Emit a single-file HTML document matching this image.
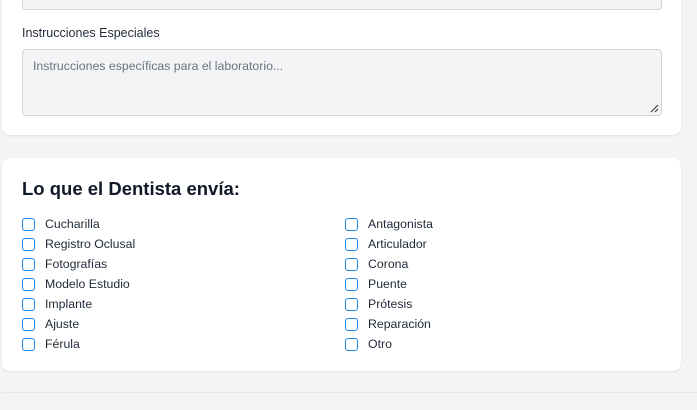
<!DOCTYPE html><html><head><style>
body{margin:0;width:697px;height:410px;background:#f3f4f6;font-family:"Liberation Sans",sans-serif;position:relative;overflow:hidden;color:#1f2937}
.card{position:absolute;left:2px;width:679px;background:#fff;border-radius:8px;box-shadow:0 1px 2px rgba(0,0,0,.08)}
.in{position:absolute;left:22px;width:638px;background:#f3f4f6;border:1px solid #d1d5db;border-radius:4px}
.cb{position:absolute;font-size:12.3px;color:#1f2937}
.cb span{position:absolute;left:0;top:1px;width:10.5px;height:10.5px;border:1.5px solid #1e88e5;border-radius:3px;background:#fff}
.cb b{font-weight:normal;position:absolute;left:23px;top:0;white-space:nowrap}
</style></head><body>
<div class="card" style="top:-10px;height:145px"></div>
<div class="in" style="top:-10px;height:18px"></div>
<div style="position:absolute;left:22px;top:26px;font-size:12.5px">Instrucciones Especiales</div>
<div class="in" style="top:49px;height:65px"><div style="position:absolute;left:10px;top:9px;font-size:12.3px;color:#6b7280">Instrucciones específicas para el laboratorio...</div>
<svg style="position:absolute;right:2px;bottom:2px" width="9" height="9"><path d="M1 8L8 1M5 8L8 5" stroke="#333" stroke-width="1"/></svg></div>
<div class="card" style="top:158px;height:213px"></div>
<div style="position:absolute;left:22px;top:178px;font-size:18.5px;font-weight:bold;color:#111827">Lo que el Dentista envía:</div>
<div id="c"></div>
<div style="position:absolute;left:2px;right:0;top:392px;height:1px;background:#e5e7eb"></div>
<script>
var L=["Cucharilla","Registro Oclusal","Fotografías","Modelo Estudio","Implante","Ajuste","Férula"],R=["Antagonista","Articulador","Corona","Puente","Prótesis","Reparación","Otro"],h="";
for(var i=0;i<7;i++){h+='<div class="cb" style="left:22px;top:'+(217+i*20)+'px"><span></span><b>'+L[i]+'</b></div><div class="cb" style="left:345px;top:'+(217+i*20)+'px"><span></span><b>'+R[i]+'</b></div>';}
document.getElementById("c").innerHTML=h;
</script>
</body></html>
